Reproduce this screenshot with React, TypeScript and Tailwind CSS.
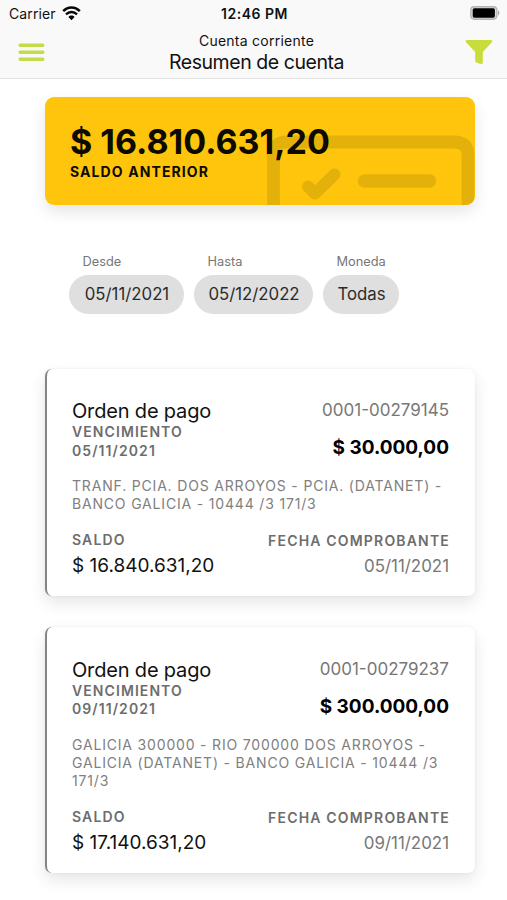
type Movement = {
  number: string;
  due: string;
  amount: string;
  detail: string[];
  balance: string;
  issued: string;
};

const movements: Movement[] = [
  {
    number: "0001-00279145",
    due: "05/11/2021",
    amount: "$ 30.000,00",
    detail: ["TRANF. PCIA. DOS ARROYOS - PCIA. (DATANET) -", "BANCO GALICIA - 10444 /3 171/3"],
    balance: "$ 16.840.631,20",
    issued: "05/11/2021",
  },
  {
    number: "0001-00279237",
    due: "09/11/2021",
    amount: "$ 300.000,00",
    detail: ["GALICIA 300000 - RIO 700000 DOS ARROYOS -", "GALICIA (DATANET) - BANCO GALICIA - 10444 /3", "171/3"],
    balance: "$ 17.140.631,20",
    issued: "09/11/2021",
  },
];

const filters = [
  { label: "Desde", value: "05/11/2021", width: "w-[115px]" },
  { label: "Hasta", value: "05/12/2022", width: "w-[119px]" },
  { label: "Moneda", value: "Todas", width: "w-[76px]" },
];

function WifiIcon() {
  return (
    <svg className="-mt-[2px]" width="19" height="15" viewBox="0 0 19 15" fill="none" stroke="#080808">
      <path d="M1.2 5.2C5.9 0.2 13.1 0.2 17.8 5.2" strokeWidth="2.5" />
      <path d="M4 8.4C7.2 5.2 11.8 5.2 15 8.4" strokeWidth="2.3" />
      <path d="M6.4 11C8.2 9.1 10.8 9.1 12.6 11L9.5 14.3Z" fill="#080808" stroke="none" />
    </svg>
  );
}

function BatteryIcon() {
  return (
    <svg width="31" height="14" viewBox="0 0 31 14">
      <rect x="0.8" y="0.8" width="26" height="12.4" rx="3.4" fill="#dcdcdc" stroke="#b4b4b4" strokeWidth="1.4" />
      <rect x="2.7" y="2.3" width="22.2" height="9.4" rx="1.6" fill="#000" />
      <path d="M28 4.6C29.8 5.2 29.8 8.8 28 9.4Z" fill="#a8a8a8" />
    </svg>
  );
}

function Header() {
  return (
    <header className="h-[79px] border-b border-[#e4e4e4] bg-[#f9f9f9] text-[#111]">
      <div className="grid h-7 grid-cols-3 items-center pl-[9px] pr-[7px]">
        <div className="flex items-center gap-[6px] text-[14px] leading-7 tracking-[0.1px]">
          Carrier
          <WifiIcon />
        </div>
        <div className="text-center text-[14px] font-semibold leading-7 tracking-[0.5px]">12:46 PM</div>
        <div className="-mr-px -mt-[2px] flex justify-end">
          <BatteryIcon />
        </div>
      </div>
      <div className="flex justify-between pl-[18px] pr-[14px]">
        <svg className="mt-[15px]" width="27" height="19" viewBox="0 0 27 19" stroke="#c5dc49" strokeWidth="3.4" strokeLinecap="round">
          <path d="M2.2 2.2H24.8M2.2 9.2H24.8M2.2 16.3H24.8" />
        </svg>
        <div className="pl-[3px] text-center">
          <div className="pt-[3px] text-[14px] leading-[20px] tracking-[0.25px]">Cuenta corriente</div>
          <div className="text-[19.5px] leading-[23px] tracking-[-0.44px]">Resumen de cuenta</div>
        </div>
        <svg className="mt-[12px]" width="28" height="25" viewBox="0 0 28 25" fill="#c8dd3b">
          <path d="M2 0H26Q28.5 0.4 26.7 2.6L17.8 12V22.8Q17.4 24.6 15.7 24L11.3 22.4Q10.2 21.9 10.2 20.8V12L1.3 2.6Q-0.5 0.4 2 0Z" />
        </svg>
      </div>
    </header>
  );
}

function BalanceCard() {
  return (
    <section className="relative h-[108px] overflow-hidden rounded-[9px] bg-[#fec50c] pl-[25px] pt-[25px] text-[#0d0a00]">
      <svg className="absolute left-[222px] top-[38px]" width="208" height="70" viewBox="0 0 208 70" fill="none" stroke="#e4b10b" strokeLinecap="round" strokeLinejoin="round">
        <path d="M6.5 90V20Q6.5 7 20 7H187Q201 7 201 20V90" strokeWidth="12.8" />
        <path d="M41 51.5L48 58.5L67.5 39.5" strokeWidth="12" />
        <path d="M97.5 46H162.5" strokeWidth="13.4" />
      </svg>
      <div className="relative text-[34px] font-bold leading-[40px]">$ 16.810.631,20</div>
      <div className="relative text-[14px] font-bold leading-[20px] tracking-[1.1px]">SALDO ANTERIOR</div>
    </section>
  );
}

function Filters() {
  return (
    <section className="mt-[46px] flex gap-[10px] pl-[24px]">
      {filters.map((f) => (
        <div key={f.label}>
          <div className="pl-[13.5px] pt-px text-[12.8px] leading-[20px] text-[#777]">{f.label}</div>
          <div className={`mt-[3px] h-[39px] rounded-full bg-[#dfdfdf] pl-px text-center text-[16.8px] leading-[39px] text-[#2b2b2b] ${f.width}`}>
            {f.value}
          </div>
        </div>
      ))}
    </section>
  );
}

function MovementCard({ item }: { item: Movement }) {
  return (
    <article className="overflow-hidden rounded-[7px] border-l-2 border-[#858585] bg-white pb-[16.3px] pl-[25px] pr-[26px] pt-[28.5px] shadow-[0_7px_16px_rgba(0,0,0,0.1),0_0_3px_rgba(0,0,0,0.06)]">
      <div className="flex justify-between">
        <div>
          <div className="-mb-[2px] text-[20px] leading-[28px] tracking-[-0.17px] text-[#111]">Orden de pago</div>
          <div className="text-[14px] font-semibold leading-[18.4px] tracking-[1.08px] text-[#6d6d6d]">
            VENCIMIENTO
            <br />
            {item.due}
          </div>
        </div>
        <div className="text-right">
          <div className="text-[17px] leading-[26px] text-[#777]">{item.number}</div>
          <div className="-mb-px mt-[12px] text-[19px] font-bold leading-[25px] text-black">{item.amount}</div>
        </div>
      </div>
      <div className="mt-[16.8px] whitespace-nowrap text-[14px] leading-[18.4px] tracking-[0.82px] text-[#808080]">
        {item.detail.map((line) => (
          <div key={line}>{line}</div>
        ))}
      </div>
      <div className="mt-[15px] flex justify-between">
        <div>
          <div className="text-[14px] font-semibold leading-[22px] tracking-[1.15px] text-[#6d6d6d]">SALDO</div>
          <div className="text-[19px] leading-[29px] text-[#111]">{item.balance}</div>
        </div>
        <div className="pt-px text-right">
          <div className="-mr-px text-[14px] font-semibold leading-[22px] tracking-[1.18px] text-[#6d6d6d]">FECHA COMPROBANTE</div>
          <div className="text-[16.9px] leading-[28px] text-[#777]">{item.issued}</div>
        </div>
      </div>
    </article>
  );
}

export default function App() {
  return (
    <div className="h-[900px] w-[507px] overflow-hidden bg-white font-['Inter',sans-serif]">
      <Header />
      <main className="pl-[45px] pr-[32px] pt-[18px]">
        <div className="rounded-[9px] shadow-[0_7px_16px_rgba(0,0,0,0.1)]">
          <BalanceCard />
        </div>
        <Filters />
        <div className="mt-[54.7px] flex flex-col gap-[31.5px]">
          {movements.map((m) => (
            <MovementCard key={m.number} item={m} />
          ))}
        </div>
      </main>
    </div>
  );
}
